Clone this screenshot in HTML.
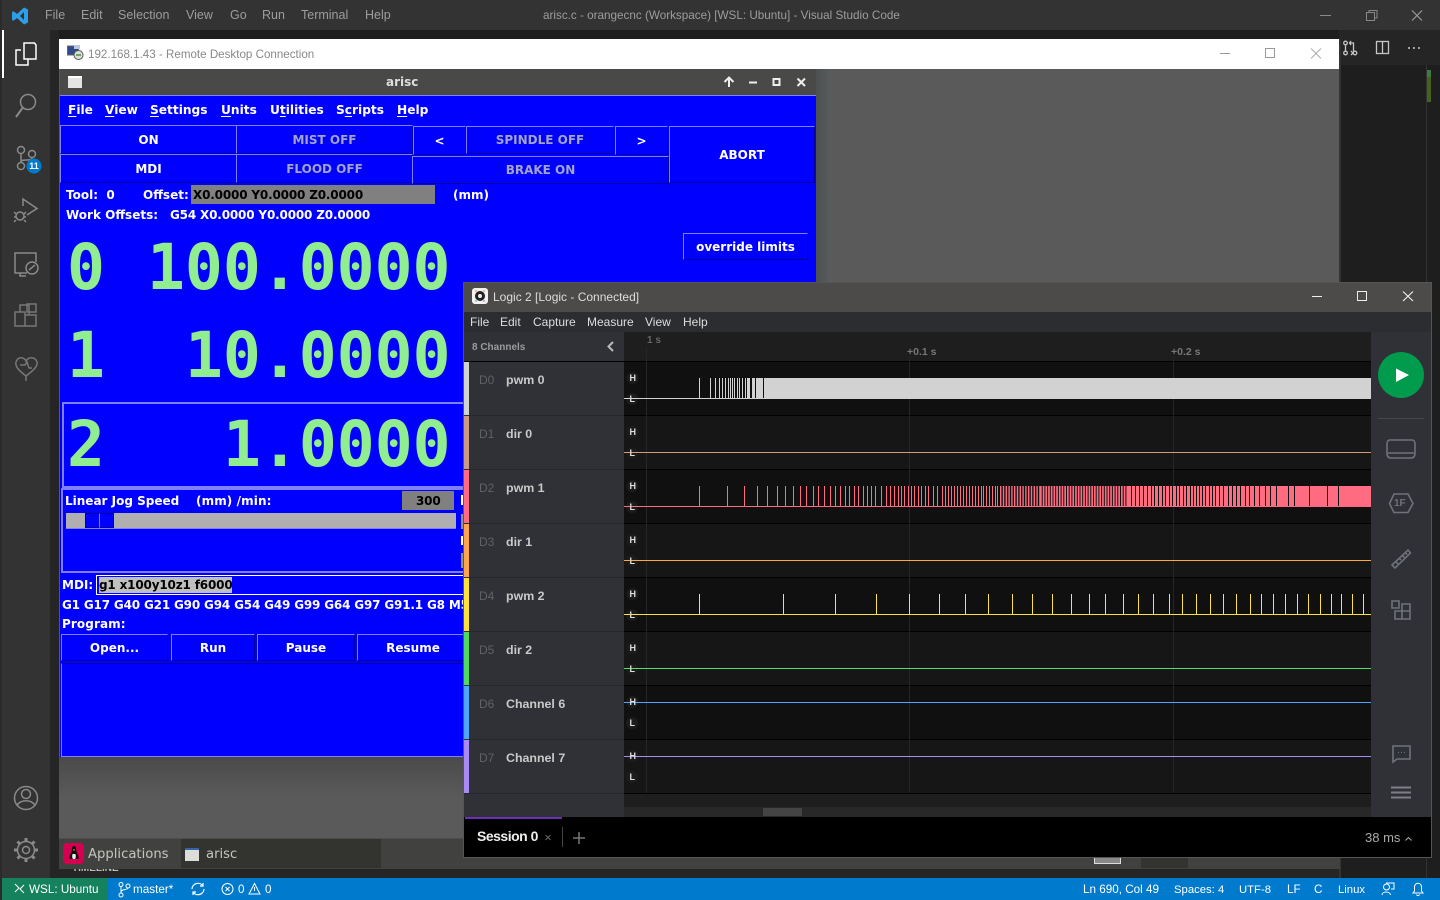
<!DOCTYPE html>
<html><head><meta charset="utf-8">
<style>
html,body{margin:0;padding:0;width:1440px;height:900px;overflow:hidden;background:#1e1e1e}
.a{position:absolute}
.t{position:absolute;white-space:pre;line-height:16px}
.v{font:12.5px "Liberation Sans",sans-serif;color:#9d9d9d}
.s{font:11.7px "Liberation Sans",sans-serif;color:#fff;top:882px;line-height:16px}
.d{font:bold 12px "DejaVu Sans",sans-serif;color:#fff;line-height:16px}
.m{font-size:12.2px}
.o{letter-spacing:-.17px}
.b{position:absolute;box-sizing:border-box;background:#00f;border-style:solid;border-width:1px;border-color:#8080ff #0000a0 #0000a0 #8080ff;font:bold 12px "DejaVu Sans",sans-serif;color:#fff;display:flex;align-items:center;justify-content:center}
.b.dg{color:#a3a3cc}
.big{position:absolute;font:bold 63px/70px "DejaVu Sans Mono",monospace;color:#90ee90;white-space:pre}
.l{font:12px "Liberation Sans",sans-serif;color:#ddd;line-height:16px}
.n{font:bold 12.4px "Liberation Sans",sans-serif;color:#c9c9c9;line-height:16px}
.c{font:12px "Liberation Sans",sans-serif;color:#5f6167;line-height:16px}
.hl{font:bold 9px "Liberation Sans",sans-serif;color:#ddd;line-height:10px}
u{text-underline-offset:2px}
</style></head><body>

<!-- VS Code shell -->
<div class="a" style="left:0;top:0;width:1440px;height:30px;background:#333"></div>
<div class="a" style="left:2px;top:30px;width:48px;height:848px;background:#333"></div>
<div class="a" style="left:0;top:0;width:2px;height:900px;background:#2b2b2b"></div>
<div class="a" style="left:50px;top:30px;width:9px;height:848px;background:#252526"></div>
<div class="a" style="left:59px;top:868px;width:1280px;height:10px;background:#252526"></div>
<div class="a" style="left:1339px;top:30px;width:101px;height:35px;background:#252526"></div>
<div class="a" style="left:1339px;top:65px;width:101px;height:813px;background:#1e1e1e"></div>
<div class="a" style="left:1426px;top:65px;width:1px;height:813px;background:#333"></div>
<div class="a" style="left:1427px;top:70px;width:4px;height:32px;background:#48601f"></div>
<div class="a" style="left:1427px;top:70px;width:4px;height:7px;background:#3f7a45"></div>
<div class="a" style="left:2px;top:30px;width:2px;height:48px;background:#fff"></div>

<span class="t v" style="left:45px;top:8px">File</span>
<span class="t v" style="left:81px;top:8px">Edit</span>
<span class="t v" style="left:118px;top:8px">Selection</span>
<span class="t v" style="left:186px;top:8px">View</span>
<span class="t v" style="left:230px;top:8px">Go</span>
<span class="t v" style="left:262px;top:8px">Run</span>
<span class="t v" style="left:301px;top:8px">Terminal</span>
<span class="t v" style="left:365px;top:8px">Help</span>
<span class="t v" style="left:543px;top:9px;font-size:11.7px">arisc.c - orangecnc (Workspace) [WSL: Ubuntu] - Visual Studio Code</span>

<!-- Shell icons -->
<svg class="a" style="left:0;top:0" width="1440" height="900" viewBox="0 0 1440 900" fill="none">
  <path d="M24 7.5 28 9.5V22.500L24 24.500 17 18 13.500 20.800 12 20V12L13.500 11.200 17 14ZM24 12 20 16 24 20Z" fill="#2d9fe8"/>
  <path d="M1320 15.500H1331" stroke="#888"/>
  <rect x="1366.500" y="12.500" width="8" height="8" stroke="#888"/><path d="M1369 12V10.500H1377V18H1375" stroke="#888"/>
  <path d="M1412 10.500 1422 20.500M1422 10.500 1412 20.500" stroke="#999" stroke-width="1.200"/>
  <!-- activity -->
  <g stroke-width="1.500">
    <path d="M24 43H34.500L36 45V59H24Z" stroke="#fff"/><path d="M21 50H16V65H28V59" stroke="#fff"/>
    <circle cx="28" cy="102" r="7.500" stroke="#8a8a8a"/><path d="M22.500 108 16 117" stroke="#8a8a8a" stroke-width="2"/>
    <circle cx="21" cy="150" r="3.500" stroke="#8a8a8a"/><circle cx="21" cy="166" r="3.500" stroke="#8a8a8a"/><circle cx="32" cy="154" r="3.500" stroke="#8a8a8a"/><path d="M21 154V162M21 162C21 158 32 162 32 158" stroke="#8a8a8a"/>
    <path d="M23 206V199L37 208.500 27 215" stroke="#8a8a8a"/>
    <circle cx="20" cy="216" r="4" stroke="#8a8a8a"/><path d="M14 212 16 214M14 217H16M14 222 16 220M26 212 24 214M26 217H24M26 222 24 220" stroke="#8a8a8a"/>
    <path d="M27 273H15V253H36V262" stroke="#8a8a8a"/><path d="M20 273V276H26" stroke="#8a8a8a"/><circle cx="32" cy="268" r="6" stroke="#8a8a8a"/><path d="M29 270 35 265" stroke="#8a8a8a"/>
    <path d="M15 312H25V326H15ZM25 326H36V315H25M20 312V305H29V315" stroke="#777"/><rect x="27" y="304" width="9" height="8" stroke="#777"/>
    <path d="M26 376C18 370 15 366 16 362 18 356 24 357 26 361 28 357 35 356 37 362 38 366 34 370 26 376Z" stroke="#777"/><path d="M20 365H25L27 362 29 368H32M26 376V381" stroke="#777"/>
    <circle cx="26" cy="798" r="11.500" stroke="#8a8a8a"/><circle cx="26" cy="794" r="4.500" stroke="#8a8a8a"/><path d="M17 806C19 799 33 799 35 806" stroke="#8a8a8a"/>
    <circle cx="26" cy="850" r="3.500" stroke="#8a8a8a"/><circle cx="26" cy="850" r="8.500" stroke="#8a8a8a"/><path d="M26 838V842M26 858V862M14 850H18M34 850H38M17.500 841.500 20 844M32 856 34.500 858.500M34.500 841.500 32 844M20 856 17.500 858.500" stroke="#8a8a8a" stroke-width="3"/>
  </g>
  <circle cx="34" cy="166" r="7.500" fill="#007acc"/>
  <!-- editor toolbar -->
  <g stroke="#c5c5c5" stroke-width="1.300">
    <circle cx="1345.500" cy="43" r="1.800"/><circle cx="1355" cy="53" r="1.800"/><circle cx="1345.500" cy="53" r="1.800"/>
    <path d="M1345.500 45V51M1350 43H1353.500V51M1351 41 1349.500 43 1351 45M1351 51 1353 53 1351 55" />
    <rect x="1376.500" y="41.500" width="12" height="12"/><path d="M1382.500 41V54"/>
  </g>
  <path d="M1408 48H1410M1413 48H1415M1418 48H1420" stroke="#c5c5c5" stroke-width="1.500"/>
</svg>
<span class="t" style="left:29px;top:159px;font:bold 9px/15px 'Liberation Sans',sans-serif;color:#fff;width:10px;text-align:center">11</span>

<!-- RDP window -->
<div class="a" style="left:59px;top:39px;width:1280px;height:30px;background:#fff"></div>
<div class="a" style="left:1339px;top:39px;width:2px;height:839px;background:#333"></div>
<svg class="a" style="left:66px;top:44px" width="20" height="18" viewBox="0 0 20 18"><rect x="1.500" y="2" width="11" height="9" fill="#2f4a8c" stroke="#666"/><rect x="8" y="1" width="6" height="4" fill="#b8c8e0"/><circle cx="12.500" cy="11" r="4.500" fill="#ddd" stroke="#555"/><path d="M10 11H15" stroke="#3a9a3a" stroke-width="1.500"/></svg>
<span class="t" style="left:88px;top:47px;font:11.6px/16px 'Liberation Sans',sans-serif;color:#888">192.168.1.43 - Remote Desktop Connection</span>
<svg class="a" style="left:1200px;top:39px" width="139" height="30" viewBox="0 0 139 30" fill="none"><path d="M20 14.500H30" stroke="#999"/><rect x="65.500" y="9.500" width="9" height="9" stroke="#999"/><path d="M111 9.500 121 19.500M121 9.500 111 19.500" stroke="#aaa"/></svg>

<!-- Remote desktop -->
<span class="t" style="left:72px;top:863px;font:bold 10px/12px 'Liberation Sans',sans-serif;color:#bbb">TIMELINE</span>
<div class="a" style="left:59px;top:69px;width:1280px;height:769px;background:#5a5a5a"></div>
<div class="a" style="left:816px;top:69px;width:15px;height:213px;background:linear-gradient(90deg,#4d5052,#5a5c5d)"></div>
<div class="a" style="left:59px;top:757px;width:405px;height:40px;background:linear-gradient(#4a4a4a,#5a5a5a)"></div>
<div class="a" style="left:59px;top:838px;width:1281px;height:31px;background:#41423f;border-top:1px solid #4d4e4b;box-sizing:border-box"></div>
<div class="a" style="left:181px;top:839px;width:200px;height:29px;background:#333430"></div>
<div class="a" style="left:63px;top:843px;width:21px;height:21px;border-radius:4px;background:#d5004f"></div>
<svg class="a" style="left:67px;top:845px" width="14" height="17" viewBox="0 0 14 17"><path d="M7 1C4.500 1 5 5 4.500 7 3.500 9 2 11 2.500 14H11.500C12 11 10.500 9 9.500 7 9 5 9.500 1 7 1Z" fill="#111"/><path d="M5.500 9C5 11 5 13 6 14H8C9 13 9 11 8.500 9Z" fill="#eee"/><path d="M6 4.500H8L7 6Z" fill="#fc3"/></svg>
<span class="t" style="left:88px;top:847px;font:13.2px/16px 'DejaVu Sans',sans-serif;color:#c4c4c0">Applications</span>
<div class="a" style="left:185px;top:848px;width:14px;height:13px;background:#dcdcd8;border-top:2px solid #3465a4;box-sizing:border-box"></div>
<span class="t" style="left:206px;top:847px;font:13.2px/16px 'DejaVu Sans',sans-serif;color:#c4c4c0">arisc</span>
<div class="a" style="left:1094px;top:856px;width:27px;height:8px;background:#888;border:1px solid #ddd;box-sizing:border-box"></div>
<div class="a" style="left:1141px;top:856px;width:47px;height:12px;background:#333430"></div>

<!-- arisc window -->
<div class="a" style="left:60px;top:69px;width:756px;height:27px;background:#494a47;border-bottom:1px solid #8080ff;box-sizing:border-box"></div>
<div class="a" style="left:68px;top:76px;width:14px;height:12px;background:#e4e4e4;border-top:2px solid #fff;box-sizing:border-box"></div>
<span class="t" style="left:386px;top:74px;font:bold 12px/16px 'DejaVu Sans',sans-serif;color:#ddd">arisc</span>
<svg class="a" style="left:720px;top:74px" width="90" height="16" viewBox="0 0 90 16" fill="none" stroke="#eee" stroke-width="2"><path d="M9 13V4M4.500 8 9 3.500 13.500 8"/><path d="M29 8.500H37"/><rect x="53.500" y="5" width="6" height="6"/><path d="M77.500 4.500 85 12M85 4.500 77.500 12"/></svg>
<div class="a" style="left:60px;top:96px;width:756px;height:661px;background:#00f"></div>

<span class="t d m" style="left:68px;top:102px"><u>F</u>ile</span>
<span class="t d m" style="left:105px;top:102px"><u>V</u>iew</span>
<span class="t d m" style="left:150px;top:102px"><u>S</u>ettings</span>
<span class="t d m" style="left:221px;top:102px"><u>U</u>nits</span>
<span class="t d m" style="left:270px;top:102px">U<u>t</u>ilities</span>
<span class="t d m" style="left:336px;top:102px">S<u>c</u>ripts</span>
<span class="t d m" style="left:397px;top:102px"><u>H</u>elp</span>

<div class="b" style="left:60px;top:125px;width:177px;height:29px">ON</div>
<div class="b dg" style="left:236px;top:125px;width:177px;height:29px">MIST OFF</div>
<div class="b" style="left:60px;top:154px;width:177px;height:29px">MDI</div>
<div class="b dg" style="left:236px;top:154px;width:177px;height:29px">FLOOD OFF</div>
<div class="b" style="left:413px;top:126px;width:53px;height:29px">&lt;</div>
<div class="b dg" style="left:466px;top:126px;width:148px;height:28px">SPINDLE OFF</div>
<div class="b" style="left:615px;top:126px;width:53px;height:29px">&gt;</div>
<div class="b dg" style="left:412px;top:156px;width:257px;height:28px">BRAKE ON</div>
<div class="b" style="left:669px;top:126px;width:146px;height:57px">ABORT</div>

<span class="t d" style="left:66px;top:187px">Tool:  0</span>
<span class="t d" style="left:143px;top:187px">Offset:</span>
<div class="a" style="left:191px;top:185px;width:244px;height:19px;background:#808080"></div>
<span class="t d o" style="left:193px;top:187px;color:#000">X0.0000 Y0.0000 Z0.0000</span>
<span class="t d" style="left:453px;top:187px">(mm)</span>
<span class="t d" style="left:66px;top:207px">Work Offsets:</span>
<span class="t d o" style="left:170px;top:207px">G54 X0.0000 Y0.0000 Z0.0000</span>
<div class="b" style="left:683px;top:233px;width:125px;height:27px">override limits</div>

<div class="big" style="left:67px;top:233px">0</div>
<div class="big" style="left:147px;top:233px">100.0000</div>
<div class="big" style="left:67px;top:321px">1</div>
<div class="big" style="left:185px;top:321px">10.0000</div>
<div class="a" style="left:62px;top:402px;width:404px;height:86px;box-sizing:border-box;border:2px solid #8080ff"></div>
<div class="big" style="left:67px;top:410px">2</div>
<div class="big" style="left:223px;top:410px">1.0000</div>

<div class="a" style="left:61px;top:488px;width:405px;height:85px;box-sizing:border-box;border:2px solid #8080ff;border-right:0"></div>
<span class="t d" style="left:65px;top:493px">Linear Jog Speed</span>
<span class="t d" style="left:196px;top:493px;letter-spacing:.1px">(mm) /min:</span>
<div class="a" style="left:402px;top:491px;width:52px;height:19px;background:#808080"></div>
<span class="t d o" style="left:416px;top:493px;color:#000">300</span>
<div class="a" style="left:66px;top:513px;width:390px;height:16px;background:#b0aeb0;border-bottom:1px solid #8080ff;box-sizing:border-box"></div>
<div class="a" style="left:85px;top:513px;width:15px;height:15px;background:#00f;border:1px solid #0000a0;box-sizing:border-box"></div>
<div class="a" style="left:99px;top:513px;width:15px;height:15px;background:#00f;border:1px solid #0000a0;border-left-color:#8080ff;box-sizing:border-box"></div>
<div class="a" style="left:461px;top:495px;width:2px;height:10px;background:#fff"></div>
<div class="a" style="left:461px;top:514px;width:3px;height:15px;background:#909090"></div>
<div class="a" style="left:461px;top:536px;width:2px;height:9px;background:#fff"></div>
<div class="a" style="left:461px;top:553px;width:3px;height:15px;background:#909090"></div>

<span class="t d" style="left:62px;top:577px">MDI:</span>
<div class="a" style="left:96px;top:575px;width:368px;height:20px;border:1px solid #fff;border-right:0;box-sizing:border-box"></div>
<div class="a" style="left:99px;top:577px;width:133px;height:16px;background:#c0c0c0"></div>
<span class="t d o" style="left:99px;top:577px;color:#000">g1 x100y10z1 f6000</span>
<span class="t d o" style="left:62px;top:597px;width:401px;overflow:hidden">G1 G17 G40 G21 G90 G94 G54 G49 G99 G64 G97 G91.1 G8 M5 M9 M48</span>
<span class="t d" style="left:62px;top:616px;letter-spacing:.1px">Program:</span>
<div class="b" style="left:61px;top:634px;width:107px;height:27px">Open...</div>
<div class="b" style="left:171px;top:634px;width:84px;height:27px">Run</div>
<div class="b" style="left:257px;top:634px;width:98px;height:27px">Pause</div>
<div class="b" style="left:357px;top:634px;width:112px;height:27px">Resume</div>
<div class="a" style="left:61px;top:663px;width:403px;height:94px;box-sizing:border-box;border:1px solid #0000a0;border-bottom-color:#8080ff;border-left-color:#8080ff;border-right:0"></div>

<!-- Logic window -->
<div class="a" style="left:463px;top:282px;width:969px;height:576px;background:#000;box-shadow:0 0 0 1px #555 inset"></div>
<div class="a" style="left:464px;top:283px;width:967px;height:29px;background:#4c4b49"></div>
<div class="a" style="left:464px;top:312px;width:967px;height:20px;background:#2b2d31"></div>
<svg class="a" style="left:472px;top:288px" width="16" height="16" viewBox="0 0 16 16"><rect width="16" height="16" rx="3" fill="#f2f2f2"/><circle cx="8" cy="8" r="5" fill="#222"/><circle cx="8" cy="8" r="2" fill="#eee"/><path d="M3 3h2M11 3h2" stroke="#e84"/><path d="M3 13h2" stroke="#4ad"/><path d="M11 13h2" stroke="#c5c"/></svg>
<span class="t l" style="left:493px;top:289px">Logic 2 [Logic - Connected]</span>
<svg class="a" style="left:1300px;top:284px" width="125" height="24" viewBox="0 0 125 24" fill="none" stroke="#eee"><path d="M12 12.500H22"/><rect x="57.500" y="7.500" width="9" height="9"/><path d="M103 7.500 113 17M113 7.500 103 17" stroke-width="1.200"/></svg>
<span class="t l" style="left:470px;top:314px">File</span>
<span class="t l" style="left:500px;top:314px">Edit</span>
<span class="t l" style="left:533px;top:314px">Capture</span>
<span class="t l" style="left:587px;top:314px">Measure</span>
<span class="t l" style="left:645px;top:314px">View</span>
<span class="t l" style="left:683px;top:314px">Help</span>

<div class="a" style="left:464px;top:332px;width:160px;height:485px;background:#2f3136"></div>
<span class="t" style="left:472px;top:341px;font:bold 10px/14px 'Liberation Sans',sans-serif;color:#9b9b9b">8 Channels</span>
<div class="a" style="left:624px;top:332px;width:747px;height:29px;background:#1e1e1e"></div>
<span class="t" style="left:647px;top:334px;font:bold 10px/14px 'Liberation Sans',sans-serif;color:#666">1 s</span>
<span class="t" style="left:907px;top:345px;font:bold 10.5px/14px 'Liberation Sans',sans-serif;color:#777">+0.1 s</span>
<span class="t" style="left:1171px;top:345px;font:bold 10.5px/14px 'Liberation Sans',sans-serif;color:#777">+0.2 s</span>
<div class="a" style="left:1371px;top:332px;width:60px;height:485px;background:#2f3136"></div>
<div class="a" style="left:624px;top:794px;width:747px;height:13px;background:#1e1e1e"></div>
<div class="a" style="left:624px;top:807px;width:747px;height:10px;background:#282828"></div>
<div class="a" style="left:763px;top:808px;width:39px;height:8px;background:#444"></div>

<svg class="a" style="left:0;top:0" width="1440" height="900" viewBox="0 0 1440 900" fill="none">
  <!-- row backgrounds -->
  <g shape-rendering="crispEdges">
    <rect x="624" y="362" width="747" height="53" fill="#101010"/>
    <rect x="624" y="416" width="747" height="53" fill="#161616"/>
    <rect x="624" y="470" width="747" height="53" fill="#101010"/>
    <rect x="624" y="524" width="747" height="53" fill="#161616"/>
    <rect x="624" y="578" width="747" height="53" fill="#101010"/>
    <rect x="624" y="632" width="747" height="53" fill="#161616"/>
    <rect x="624" y="686" width="747" height="53" fill="#101010"/>
    <rect x="624" y="740" width="747" height="53" fill="#161616"/>
    <path d="M624 361.500H1371M624 415.500H1371M624 469.500H1371M624 523.500H1371M624 577.500H1371M624 631.500H1371M624 685.500H1371M624 739.500H1371M624 793.500H1371" stroke="#000"/>
    <path d="M464 361.500H624" stroke="#000"/>
    <path d="M469 415.500H624M469 469.500H624M469 523.500H624M469 577.500H624M469 631.500H624M469 685.500H624M469 739.500H624M464 793.500H624" stroke="#26282c"/>
    <path d="M646.500 346V793M909.500 358V793M1173.500 358V793" stroke="#262626"/>
    <rect x="464" y="362" width="5" height="53" fill="#d2d2d2"/>
    <rect x="464" y="416" width="5" height="53" fill="#c99a84"/>
    <rect x="464" y="470" width="5" height="53" fill="#ff6b81"/>
    <rect x="464" y="524" width="5" height="53" fill="#ffa34d"/>
    <rect x="464" y="578" width="5" height="53" fill="#ffe13d"/>
    <rect x="464" y="632" width="5" height="53" fill="#4fd965"/>
    <rect x="464" y="686" width="5" height="53" fill="#4ea4ff"/>
    <rect x="464" y="740" width="5" height="53" fill="#a98bf5"/>
  </g>
  <!-- H / L chips -->
  <g fill="#1c1c1c">
    <circle cx="632.500" cy="378" r="6"/><circle cx="632" cy="399" r="6"/>
    <circle cx="632.500" cy="432" r="6"/><circle cx="632" cy="453" r="6"/>
    <circle cx="632.500" cy="486" r="6"/><circle cx="632" cy="507" r="6"/>
    <circle cx="632.500" cy="540" r="6"/><circle cx="632" cy="561" r="6"/>
    <circle cx="632.500" cy="594" r="6"/><circle cx="632" cy="615" r="6"/>
    <circle cx="632.500" cy="648" r="6"/><circle cx="632" cy="669" r="6"/>
    <circle cx="632.500" cy="702" r="6"/><circle cx="632" cy="723" r="6"/>
    <circle cx="632.500" cy="756" r="6"/><circle cx="632" cy="777" r="6"/>
  </g>
  <g shape-rendering="crispEdges">
    <!-- lines -->
    <path d="M624 398.500H1371" stroke="#d2d2d2"/>
    <path d="M624 452.500H1371" stroke="#d39a80"/>
    <path d="M624 506.500H1371" stroke="#ff6b81"/>
    <path d="M624 560.500H1371" stroke="#ffa840"/>
    <path d="M624 614.500H1371" stroke="#ffe13d"/>
    <path d="M624 668.500H1371" stroke="#4fe065"/>
    <path d="M624 702.500H1371" stroke="#4ea4ff"/>
    <path d="M624 756.500H1371" stroke="#a98bf5"/>
    <!-- D0 -->
    <path d="M699.500 378V399M710.500 378V399M715.500 378V399M719.500 378V399M722.500 378V399M725.500 378V399M728.500 378V399M730.500 378V399M732.500 378V399M734.500 378V399M737.500 378V399M739.500 378V399M742.500 378V399M745.500 378V399" stroke="#d2d2d2"/>
    <rect x="747" y="378" width="3" height="21" fill="#d2d2d2"/>
    <rect x="752" y="378" width="3" height="21" fill="#d2d2d2"/>
    <rect x="756" y="378" width="7" height="21" fill="#d2d2d2"/>
    <rect x="764" y="378" width="607" height="21" fill="#d2d2d2"/>
    <!-- D2 ticks -->
    <path stroke="#ff6b81" d="M699.500 486V507M727.500 486V507M744.500 486V507M757.500 486V507M767.500 486V507M777.500 486V507M785.500 486V507M793.500 486V507M800.500 486V507M806.500 486V507M813.500 486V507M818.500 486V507M824.500 486V507M830.500 486V507M835.500 486V507M840.500 486V507M845.500 486V507M849.500 486V507M854.500 486V507M858.500 486V507M863.500 486V507M867.500 486V507M871.500 486V507M875.500 486V507M881.500 486V507M886.500 486V507M890.500 486V507M894.500 486V507M898.500 486V507M901.500 486V507M904.500 486V507M908.500 486V507M911.500 486V507M914.500 486V507M918.500 486V507M921.500 486V507M925.500 486V507M928.500 486V507M933.500 486V507M937.500 486V507M942.500 486V507M945.500 486V507M948.500 486V507M951.500 486V507M954.500 486V507M957.500 486V507M960.500 486V507M963.500 486V507M966.500 486V507M969.500 486V507M972.500 486V507M975.500 486V507M978.500 486V507M981.500 486V507M983.500 486V507M986.500 486V507M989.500 486V507M992.500 486V507M995.500 486V507M997.500 486V507"/>
  </g>
  <path d="M1000 496.500H1040" stroke="#ff6b81" stroke-width="21" stroke-dasharray="1.400 1.400"/>
  <path d="M1040 496.500H1127" stroke="#ff6b81" stroke-width="21" stroke-dasharray="1.700 1"/>
  <g shape-rendering="crispEdges">
    <rect x="1127" y="486" width="244" height="21" fill="#ff6b81"/>
    <path stroke="#101010" d="M1131.500 486V506M1135.500 486V506M1139.500 486V506M1143.500 486V506M1147.500 486V506M1151.500 486V506M1154.500 486V506M1158.500 486V506M1162.500 486V506M1165.500 486V506M1169.500 486V506M1172.500 486V506M1176.500 486V506M1179.500 486V506M1183.500 486V506M1186.500 486V506M1190.500 486V506M1193.500 486V506M1196.500 486V506M1199.500 486V506M1202.500 486V506M1205.500 486V506M1209.500 486V506M1212.500 486V506M1215.500 486V506M1219.500 486V506M1223.500 486V506M1228.500 486V506M1232.500 486V506M1236.500 486V506M1240.500 486V506M1245.500 486V506M1249.500 486V506M1254.500 486V506M1259.500 486V506M1265.500 486V506M1270.500 486V506M1276.500 486V506M1288.500 486V506M1294.500 486V506M1309.500 486V506M1327.500 486V506M1338.500 486V506"/>
    <!-- D4 ticks -->
    <path stroke="#ffe13d" d="M699.500 594V615M783.500 594V615M835.500 594V615M876.500 594V615M909.500 594V615M939.500 594V615M965.500 594V615M988.500 594V615M1012.500 594V615M1032.500 594V615M1052.500 594V615M1071.500 594V615M1089.500 594V615M1105.500 594V615M1123.500 594V615M1138.500 594V615M1153.500 594V615M1169.500 594V615M1182.500 594V615M1196.500 594V615M1210.500 594V615M1223.500 594V615M1236.500 594V615M1250.500 594V615M1261.500 594V615M1273.500 594V615M1285.500 594V615M1297.500 594V615M1308.500 594V615M1320.500 594V615M1331.500 594V615M1341.500 594V615M1352.500 594V615M1363.500 594V615"/>
  </g>
  <path d="M613 342 608.500 346.500 613 351" stroke="#bbb" stroke-width="2"/>
  <!-- right rail -->
  <path d="M1378 418.500H1424" stroke="#45474c"/>
  <circle cx="1401" cy="375" r="23" fill="#009b4d"/>
  <path d="M1396 368.500V382L1409 375Z" fill="#fff"/>
  <g stroke="#70727a" stroke-width="1.600">
    <path d="M1390 440H1412C1414 440 1415 442 1415 444V453C1415 456 1414 458 1411 458H1391C1388 458 1387 456 1387 453V444C1387 442 1388 440 1390 440ZM1388 453H1414"/>
    <path d="M1394 494H1408L1413 503.500 1408 512.500H1394L1389.500 503.500Z"/>
    <path d="M1392 565 1408 550 1410.500 553 1395 568ZM1395.500 561 1398 564M1399 558 1401 560M1402 555 1404.500 557.500M1405 552 1407 554.500"/>
    <path d="M1392 601H1399V608H1392ZM1395 611H1402V619H1395ZM1402 604H1410V611H1402ZM1402 611H1410V619H1402Z"/>
    <path d="M1393 746H1410V759H1397L1393 762Z"/>
  </g>
  <path d="M1398 752.500H1399M1401 752.500H1402M1404 752.500H1405" stroke="#70727a"/>
  <path d="M1391 787.500H1411M1391 792.500H1411M1391 797.500H1411" stroke="#7d7f86" stroke-width="2"/>
  <!-- session tab -->
  <rect x="465" y="817" width="97" height="2" fill="#6a2fb5"/>
  <path d="M562.500 827V847" stroke="#444"/>
  <path d="M579 832V844M573 838H585" stroke="#777" stroke-width="1.500"/>
  <path d="M545.500 835 550.500 840M550.500 835 545.500 840" stroke="#666"/>
  <path d="M1405.500 840.500 1408.500 837.500 1411.500 840.500" stroke="#aaa"/>
</svg>

<span class="t hl" style="left:629.500px;top:373px">H</span><span class="t hl" style="left:629.500px;top:394px">L</span>
<span class="t hl" style="left:629.500px;top:427px">H</span><span class="t hl" style="left:629.500px;top:448px">L</span>
<span class="t hl" style="left:629.500px;top:481px">H</span><span class="t hl" style="left:629.500px;top:502px">L</span>
<span class="t hl" style="left:629.500px;top:535px">H</span><span class="t hl" style="left:629.500px;top:556px">L</span>
<span class="t hl" style="left:629.500px;top:589px">H</span><span class="t hl" style="left:629.500px;top:610px">L</span>
<span class="t hl" style="left:629.500px;top:643px">H</span><span class="t hl" style="left:629.500px;top:664px">L</span>
<span class="t hl" style="left:629.500px;top:697px">H</span><span class="t hl" style="left:629.500px;top:718px">L</span>
<span class="t hl" style="left:629.500px;top:751px">H</span><span class="t hl" style="left:629.500px;top:772px">L</span>

<span class="t c" style="left:479px;top:372px">D0</span><span class="t n" style="left:506px;top:372px">pwm 0</span>
<span class="t c" style="left:479px;top:426px">D1</span><span class="t n" style="left:506px;top:426px">dir 0</span>
<span class="t c" style="left:479px;top:480px">D2</span><span class="t n" style="left:506px;top:480px">pwm 1</span>
<span class="t c" style="left:479px;top:534px">D3</span><span class="t n" style="left:506px;top:534px">dir 1</span>
<span class="t c" style="left:479px;top:588px">D4</span><span class="t n" style="left:506px;top:588px">pwm 2</span>
<span class="t c" style="left:479px;top:642px">D5</span><span class="t n" style="left:506px;top:642px">dir 2</span>
<span class="t c" style="left:479px;top:696px">D6</span><span class="t n" style="left:506px;top:696px">Channel 6</span>
<span class="t c" style="left:479px;top:750px">D7</span><span class="t n" style="left:506px;top:750px">Channel 7</span>
<span class="t" style="left:1394px;top:497px;font:bold 10px/13px 'Liberation Sans',sans-serif;color:#70727a">1F</span>
<span class="t" style="left:477px;top:828px;font:bold 14px/16px 'Liberation Sans',sans-serif;color:#eee;letter-spacing:-.5px">Session 0</span>
<span class="t" style="left:1365px;top:830px;font:13px/16px 'Liberation Sans',sans-serif;color:#aaa">38 ms</span>

<!-- Status bar -->
<div class="a" style="left:0;top:878px;width:1440px;height:22px;background:#007acc"></div>
<div class="a" style="left:0;top:878px;width:2px;height:22px;background:#2b2b2b"></div>
<div class="a" style="left:2px;top:878px;width:106px;height:22px;background:#16825d"></div>
<svg class="a" style="left:0;top:878px" width="280" height="22" viewBox="0 0 280 22" fill="none" stroke="#fff">
  <path d="M15 14 19 10 15 6M24 7 20 11 24 15"/>
  <circle cx="121" cy="6.500" r="2"/><circle cx="121" cy="17" r="2"/><circle cx="128" cy="8" r="2"/><path d="M121 8.500V15M121 14C121 11 128 12 128 10"/>
  <path d="M192 11A6 6 0 0 1 203 8M204 11A6 6 0 0 1 193 14M203 5V8H200M193 17V14H196" stroke-width="1.200"/>
  <circle cx="227.500" cy="11" r="5.500"/><path d="M225.500 9 229.500 13M229.500 9 225.500 13"/>
  <path d="M254.500 5.500 260 16H249Z"/><path d="M254.500 9V13"/>
</svg>
<span class="t s" style="left:29px">WSL: Ubuntu</span>
<span class="t s" style="left:133px">master*</span>
<span class="t s" style="left:238px">0</span>
<span class="t s" style="left:265px">0</span>
<span class="t s" style="left:1083px">Ln 690, Col 49</span>
<span class="t s" style="left:1174px;font-size:11.3px">Spaces: 4</span>
<span class="t s" style="left:1239px;font-size:11.3px">UTF-8</span>
<span class="t s" style="left:1287px">LF</span>
<span class="t s" style="left:1314px">C</span>
<span class="t s" style="left:1338px;font-size:11.3px">Linux</span>
<svg class="a" style="left:1380px;top:880px" width="45" height="18" viewBox="0 0 45 18" fill="none" stroke="#fff"><circle cx="6.500" cy="7" r="3"/><path d="M2 15C2 11 10 11 10.500 15M6 3H14V9H11"/><path d="M33 13H43L41.500 11V7C41.500 2 34.500 2 34.500 7V11ZM36.500 14.500C37 16 39 16 39.500 14.500"/></svg>
</body></html>
